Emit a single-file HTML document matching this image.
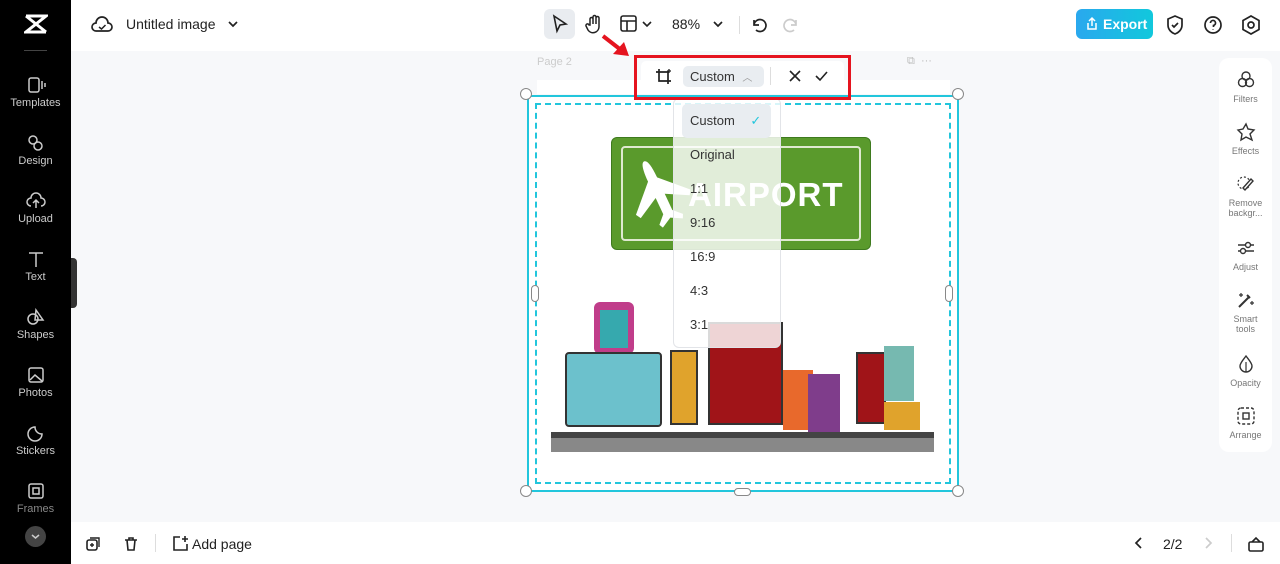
<!DOCTYPE html>
<html><head><meta charset="utf-8"><style>
*{box-sizing:border-box;margin:0;padding:0}
body{width:1280px;height:564px;overflow:hidden;font-family:"Liberation Sans",sans-serif;background:#f7f8fa;position:relative;color:#222}
.abs{position:absolute}
.side{left:0;top:0;width:71px;height:564px;background:#000;color:#ddd}
.si{position:absolute;left:0;width:71px;text-align:center;font-size:11px;color:#ccc}
.si svg{display:block;margin:0 auto 3px}
.top{left:71px;top:0;width:1209px;height:51px;background:#fff}
.bot{left:71px;top:522px;width:1209px;height:42px;background:#fff}
.rp{left:1219px;top:58px;width:53px;height:394px;background:#fff;border-radius:10px}
.ri{position:absolute;left:0;width:53px;text-align:center;font-size:9px;color:#777;line-height:10px}
.ri svg{display:block;margin:0 auto 4px}
.dd div{height:34px;line-height:34px;padding-left:16px;font-size:13px;color:#333}
</style></head><body>
<div class="abs side">
 <svg class="abs" style="left:24px;top:14px" width="24" height="20" viewBox="0 0 24 20"><path d="M2 2h20L2 18h20M2 2l20 16" stroke="#fff" stroke-width="3" fill="none"/></svg>
 <div class="abs" style="left:24px;top:50px;width:23px;height:1px;background:#444"></div>
 <div class="si" style="top:76px"><svg width="20" height="18"><rect x="3" y="2" width="10" height="14" rx="2" stroke="#ccc" fill="none" stroke-width="1.5"/><path d="M16 5v8M19 7v4" stroke="#ccc" stroke-width="1.5"/></svg>Templates</div>
 <div class="si" style="top:134px"><svg width="20" height="18"><circle cx="7" cy="6" r="4" stroke="#ccc" fill="none" stroke-width="1.5"/><circle cx="12" cy="12" r="4" stroke="#ccc" fill="none" stroke-width="1.5"/></svg>Design</div>
 <div class="si" style="top:192px"><svg width="20" height="18"><path d="M5 14a4 4 0 0 1 0-8 5 5 0 0 1 10 0 4 4 0 0 1 0 8M10 16V9M7 11l3-3 3 3" stroke="#ccc" fill="none" stroke-width="1.5"/></svg>Upload</div>
 <div class="si" style="top:250px"><svg width="20" height="18"><path d="M3 3h14M10 3v14" stroke="#ccc" stroke-width="1.5"/></svg>Text</div>
 <div class="si" style="top:308px"><svg width="20" height="18"><circle cx="7" cy="11" r="5" stroke="#ccc" fill="none" stroke-width="1.5"/><path d="M10 2l7 10h-8z" stroke="#ccc" fill="none" stroke-width="1.5"/></svg>Shapes</div>
 <div class="si" style="top:366px"><svg width="20" height="18"><rect x="3" y="2" width="14" height="14" rx="2" stroke="#ccc" fill="none" stroke-width="1.5"/><path d="M4 14l5-5 7 6" stroke="#ccc" fill="none" stroke-width="1.5"/></svg>Photos</div>
 <div class="si" style="top:424px"><svg width="20" height="18"><path d="M16 10A7 7 0 1 1 9 3c0 4 3 7 7 7z" stroke="#ccc" fill="none" stroke-width="1.5"/></svg>Stickers</div>
 <div class="si" style="top:482px;color:#888"><svg width="20" height="18"><rect x="3" y="2" width="14" height="14" rx="2" stroke="#ccc" fill="none" stroke-width="1.5"/><rect x="7" y="6" width="6" height="6" stroke="#ccc" fill="none" stroke-width="1.5"/></svg>Frames</div>
 <div class="abs" style="left:25px;top:526px;width:21px;height:21px;border-radius:50%;background:#444"><svg width="21" height="21"><path d="M7 9l3.5 3 3.5-3" stroke="#ccc" fill="none" stroke-width="1.5"/></svg></div>
</div>
<div class="abs" style="left:71px;top:258px;width:6px;height:50px;background:#333;border-radius:0 4px 4px 0"></div>
<div class="abs top">
 <svg class="abs" style="left:20px;top:15px" width="22" height="20"><path d="M5 16a4 4 0 0 1 0-8 6 6 0 0 1 12 0 4 4 0 0 1 0 8z" stroke="#222" fill="none" stroke-width="1.7"/><path d="M8 12l2.5 2 4-4" stroke="#222" fill="none" stroke-width="1.5"/></svg>
 <div class="abs" style="left:55px;top:16px;font-size:14px;color:#222">Untitled image</div>
 <svg class="abs" style="left:156px;top:18px" width="12" height="12"><path d="M2 4l4 4 4-4" stroke="#222" fill="none" stroke-width="1.7"/></svg>
 <div class="abs" style="left:473px;top:9px;width:31px;height:30px;background:#e9ecf0;border-radius:6px"><svg width="31" height="30"><path d="M10 7l12 8-6 1-3 6z" stroke="#222" fill="none" stroke-width="1.6"/></svg></div>
 <svg class="abs" style="left:512px;top:13px" width="22" height="22"><path d="M7 12V6a1.5 1.5 0 0 1 3 0v5V4a1.5 1.5 0 0 1 3 0v7V5a1.5 1.5 0 0 1 3 0v9a6 6 0 0 1-11 3l-2-4a1.5 1.5 0 0 1 3-1z" stroke="#222" fill="none" stroke-width="1.5"/></svg>
 <svg class="abs" style="left:548px;top:14px" width="36" height="20"><rect x="2" y="2" width="15" height="15" rx="2" stroke="#222" fill="none" stroke-width="1.6"/><path d="M2 7h15M8 7v10M24 8l4 4 4-4" stroke="#222" fill="none" stroke-width="1.6"/></svg>
 <div class="abs" style="left:601px;top:16px;font-size:14px">88%</div>
 <svg class="abs" style="left:641px;top:18px" width="12" height="12"><path d="M2 4l4 4 4-4" stroke="#222" fill="none" stroke-width="1.7"/></svg>
 <div class="abs" style="left:668px;top:16px;width:1px;height:18px;background:#ddd"></div>
 <svg class="abs" style="left:678px;top:15px" width="20" height="20"><path d="M5 5v5h5M5 10a6 6 0 1 1 2 5" stroke="#222" fill="none" stroke-width="1.7"/></svg>
 <svg class="abs" style="left:710px;top:15px" width="20" height="20"><path d="M15 5v5h-5M15 10a6 6 0 1 0-2 5" stroke="#ccc" fill="none" stroke-width="1.7"/></svg>
 <div class="abs" style="left:1005px;top:9px;width:77px;height:30px;border-radius:6px;background:linear-gradient(90deg,#2aa8ee,#11c8dc);color:#fff;font-weight:bold;font-size:14px;line-height:30px;padding-left:27px">Export</div>
 <svg class="abs" style="left:1014px;top:16px" width="14" height="16"><path d="M3 7v6h8V7M7 10V2M4 5l3-3 3 3" stroke="#fff" fill="none" stroke-width="1.5"/></svg>
 <svg class="abs" style="left:1094px;top:14px" width="20" height="22"><path d="M10 2l7 3v6c0 5-4 8-7 9-3-1-7-4-7-9V5z" stroke="#222" fill="none" stroke-width="1.7"/><path d="M7 11l2 2 4-4" stroke="#222" fill="none" stroke-width="1.7"/></svg>
 <svg class="abs" style="left:1131px;top:14px" width="22" height="22"><circle cx="11" cy="11" r="8" stroke="#222" fill="none" stroke-width="1.7"/><path d="M8.5 9a2.5 2.5 0 1 1 3 2.4V13M11 15.5v.5" stroke="#222" fill="none" stroke-width="1.7"/></svg>
 <svg class="abs" style="left:1169px;top:14px" width="22" height="22"><path d="M11 2l8 4.5v9L11 20l-8-4.5v-9z" stroke="#222" fill="none" stroke-width="1.7"/><circle cx="11" cy="11" r="3" stroke="#222" fill="none" stroke-width="1.7"/></svg>
</div>
<div class="abs" style="left:537px;top:56px;font-size:11px;color:#ccc">Page 2</div>
<div class="abs" style="left:907px;top:55px;font-size:11px;color:#bbb">⧉ &nbsp;···</div>
<div class="abs" style="left:537px;top:80px;width:413px;height:14px;background:#fff"></div>
<div class="abs" style="left:527px;top:95px;width:432px;height:397px;background:#fff;border:2px solid #22c6dc"></div>
<div class="abs" style="left:535px;top:103px;width:416px;height:381px;border:2px dashed #22c6dc"></div>
<div class="abs" style="left:611px;top:137px;width:260px;height:113px;background:#5a9a2c;border-radius:6px;border:1px solid #3e7a1e"></div>
<div class="abs" style="left:621px;top:146px;width:240px;height:95px;border:2px solid #dfe9d0;border-radius:4px"></div>
<div class="abs" style="left:688px;top:176px;font-size:33px;font-weight:bold;color:#fff;letter-spacing:1px">AIRPORT</div>
<svg class="abs" style="left:630px;top:155px" width="64" height="80"><path d="M30 2c4 0 5 10 5 20l25 25-3 5-22-12 0 18 8 8-2 4-11-6-11 6-2-4 8-8 0-18-22 12-3-5 25-25c0-10 1-20 5-20z" fill="#fff" transform="rotate(-25 32 40)"/></svg>
<div class="abs" style="left:551px;top:432px;width:383px;height:20px;background:#888"></div>
<div class="abs" style="left:551px;top:432px;width:383px;height:6px;background:#444"></div>
<div class="abs" style="left:594px;top:302px;width:40px;height:52px;background:#c03d8a;border-radius:6px"></div>
<div class="abs" style="left:600px;top:310px;width:28px;height:38px;background:#36a9ae"></div>
<div class="abs" style="left:565px;top:352px;width:97px;height:75px;background:#6cc1cc;border:2px solid #333;border-radius:4px"></div>
<div class="abs" style="left:670px;top:350px;width:28px;height:75px;background:#e0a32c;border:2px solid #333"></div>
<div class="abs" style="left:708px;top:322px;width:75px;height:103px;background:#a01418;border:2px solid #333"></div>
<div class="abs" style="left:783px;top:370px;width:30px;height:60px;background:#e8692c"></div>
<div class="abs" style="left:808px;top:374px;width:32px;height:58px;background:#7f3d8b"></div>
<div class="abs" style="left:856px;top:352px;width:30px;height:72px;background:#a01418;border:2px solid #333"></div>
<div class="abs" style="left:884px;top:346px;width:30px;height:55px;background:#76b9b0"></div>
<div class="abs" style="left:884px;top:402px;width:36px;height:28px;background:#e0a32c"></div>
<div class="abs" style="left:520px;top:88px;width:12px;height:12px;border-radius:50%;background:#fff;border:1px solid #888"></div>
<div class="abs" style="left:952px;top:88px;width:12px;height:12px;border-radius:50%;background:#fff;border:1px solid #888"></div>
<div class="abs" style="left:520px;top:485px;width:12px;height:12px;border-radius:50%;background:#fff;border:1px solid #888"></div>
<div class="abs" style="left:952px;top:485px;width:12px;height:12px;border-radius:50%;background:#fff;border:1px solid #888"></div>
<div class="abs" style="left:531px;top:285px;width:8px;height:17px;border-radius:4px;background:#fff;border:1px solid #888"></div>
<div class="abs" style="left:945px;top:285px;width:8px;height:17px;border-radius:4px;background:#fff;border:1px solid #888"></div>
<div class="abs" style="left:734px;top:488px;width:17px;height:8px;border-radius:4px;background:#fff;border:1px solid #888"></div>
<div class="abs dd" style="left:673px;top:98px;width:108px;height:250px;background:rgba(255,255,255,.82);border:1px solid #e2e4e8;border-radius:6px;padding-top:5px">
 <div style="margin:0 9px 0 8px;padding-left:8px;background:#e9edf1;border-radius:5px">Custom <span style="color:#22c6dc;margin-left:12px">✓</span></div>
 <div>Original</div><div>1:1</div><div>9:16</div><div>16:9</div><div>4:3</div><div>3:1</div>
</div>
<div class="abs" style="left:634px;top:55px;width:217px;height:45px;border:3px solid #e5141f"></div>
<div class="abs" style="left:641px;top:61px;width:203px;height:32px;background:#fff;border-radius:5px"></div>
<svg class="abs" style="left:655px;top:68px" width="18" height="18"><path d="M4 1v12h12M1 4h12v12" stroke="#222" fill="none" stroke-width="1.7"/><path d="M14 1v4M12 3h4" stroke="#222" stroke-width="1.3"/></svg>
<div class="abs" style="left:683px;top:66px;width:81px;height:21px;background:#e9edf1;border-radius:5px;font-size:13px;line-height:21px;padding-left:7px;color:#333">Custom <span style="color:#999;font-size:10px;margin-left:4px">︿</span></div>
<div class="abs" style="left:770px;top:67px;width:1px;height:18px;background:#ddd"></div>
<svg class="abs" style="left:788px;top:69px" width="14" height="14"><path d="M2 2l10 10M12 2L2 12" stroke="#222" stroke-width="1.6"/></svg>
<svg class="abs" style="left:814px;top:69px" width="15" height="14"><path d="M2 7l4 4 7-8" stroke="#222" fill="none" stroke-width="1.6"/></svg>
<svg class="abs" style="left:601px;top:33px" width="30" height="26"><path d="M2 3l18 14" stroke="#e5141f" stroke-width="4"/><path d="M12 21l16 2-5-14z" fill="#e5141f"/></svg>
<div class="abs rp">
 <div class="ri" style="top:12px"><svg width="20" height="20"><circle cx="10" cy="6" r="4" stroke="#333" fill="none" stroke-width="1.4"/><circle cx="6.5" cy="12.5" r="4" stroke="#333" fill="none" stroke-width="1.4"/><circle cx="13.5" cy="12.5" r="4" stroke="#333" fill="none" stroke-width="1.4"/></svg>Filters</div>
 <div class="ri" style="top:64px"><svg width="20" height="20"><path d="M10 2l2 5 6 1-4 4 2 6-6-3-5 3 1-6-4-4 5-1z" stroke="#333" fill="none" stroke-width="1.4"/></svg>Effects</div>
 <div class="ri" style="top:116px"><svg width="20" height="20"><circle cx="8" cy="9" r="6" stroke="#333" fill="none" stroke-width="1.2" stroke-dasharray="2 2"/><path d="M7 14l8-9 2 2-8 9z" stroke="#333" fill="#fff" stroke-width="1.4"/></svg>Remove<br>backgr...</div>
 <div class="ri" style="top:180px"><svg width="20" height="20"><path d="M2 7h16M2 13h16" stroke="#333" stroke-width="1.4"/><circle cx="12" cy="7" r="2.5" fill="#fff" stroke="#333" stroke-width="1.4"/><circle cx="7" cy="13" r="2.5" fill="#fff" stroke="#333" stroke-width="1.4"/></svg>Adjust</div>
 <div class="ri" style="top:232px"><svg width="20" height="20"><path d="M3 17l10-10M11 5l3 3" stroke="#333" stroke-width="2"/><path d="M5 3v4M3 5h4M16 11v4M14 13h4" stroke="#333" stroke-width="1.2"/></svg>Smart<br>tools</div>
 <div class="ri" style="top:296px"><svg width="20" height="20"><path d="M10 2c3 4 6 7 6 10a6 6 0 0 1-12 0c0-3 3-6 6-10z" stroke="#333" fill="none" stroke-width="1.4"/><path d="M10 8v10" stroke="#333" stroke-width="1.2"/></svg>Opacity</div>
 <div class="ri" style="top:348px"><svg width="20" height="20"><rect x="2" y="2" width="16" height="16" rx="3" stroke="#333" fill="none" stroke-width="1.4" stroke-dasharray="3 2"/><rect x="7" y="7" width="6" height="6" stroke="#333" fill="none" stroke-width="1.4"/></svg>Arrange</div>
</div>
<div class="abs bot">
 <svg class="abs" style="left:14px;top:14px" width="16" height="16"><rect x="2" y="4" width="10" height="10" rx="2" stroke="#222" fill="none" stroke-width="1.6"/><path d="M5 2h9v9M5 9h4M7 7v4" stroke="#222" fill="none" stroke-width="1.4"/></svg>
 <svg class="abs" style="left:52px;top:14px" width="16" height="16"><path d="M2 4h12M6 4V2h4v2M4 4l1 10h6l1-10" stroke="#222" fill="none" stroke-width="1.6"/></svg>
 <div class="abs" style="left:84px;top:12px;width:1px;height:18px;background:#ddd"></div>
 <svg class="abs" style="left:100px;top:13px" width="18" height="18"><path d="M9 2H3v13h13V9" stroke="#222" fill="none" stroke-width="1.6"/><path d="M14 1v6M11 4h6" stroke="#222" stroke-width="1.6"/></svg>
 <div class="abs" style="left:121px;top:14px;font-size:14px">Add page</div>
 <svg class="abs" style="left:1061px;top:14px" width="14" height="14"><path d="M9 2L4 7l5 5" stroke="#222" fill="none" stroke-width="1.7"/></svg>
 <div class="abs" style="left:1092px;top:14px;font-size:14px">2/2</div>
 <svg class="abs" style="left:1130px;top:14px" width="14" height="14"><path d="M5 2l5 5-5 5" stroke="#ccc" fill="none" stroke-width="1.7"/></svg>
 <div class="abs" style="left:1160px;top:12px;width:1px;height:18px;background:#ddd"></div>
 <svg class="abs" style="left:1176px;top:13px" width="18" height="18"><rect x="2" y="7" width="14" height="9" rx="1.5" stroke="#222" fill="none" stroke-width="1.6"/><path d="M5 7l4-4 4 4" stroke="#222" fill="none" stroke-width="1.6"/></svg>
</div>
</body></html>
